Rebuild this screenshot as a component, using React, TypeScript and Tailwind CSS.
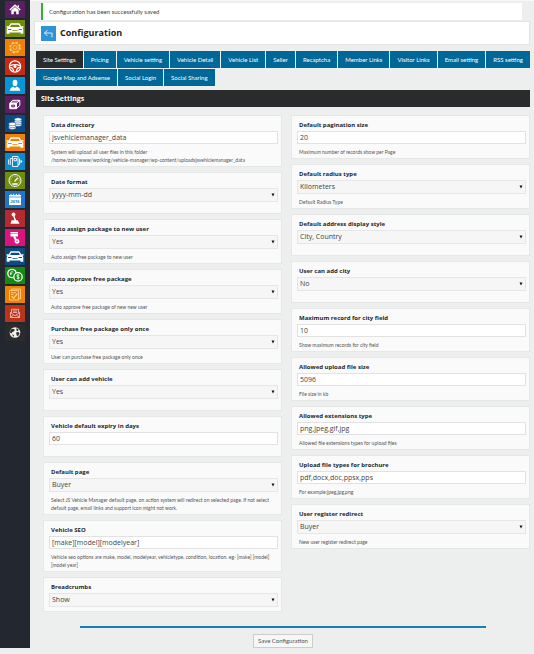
import React from "react";

const Car = () => (
  <g>
    <path d="M4.300 6.800 6 4h8l1.700 2.800" fill="none" stroke="#fff" strokeWidth="1.300" />
    <path
      d="M1.500 6.200h2.200l.6.700h11.400l.6-.7h2.200v1.200l-1.100.3.900 1.400v4.600h-2.800v-1.200H4.500v1.200H1.700V9.100l.9-1.400-1.100-.3z"
      fill="#fff"
    />
    <path d="M3 9h3.300l.4 1.100H3zM17 9h-3.300l-.4 1.100H17zM7.500 10.200h5v.8h-5z" className="fill-current" />
  </g>
);

type Tile = { name: string; tone: string; art: React.ReactNode };

const tiles: Tile[] = [
  {
    name: "Home",
    tone: "bg-[#5a1f60]",
    art: (
      <g>
        <path d="M4.800 9 10 4.300 15.200 9" fill="none" stroke="#fff" strokeWidth="1.500" />
        <path d="M12.600 4.200h1.400v2.600l-1.400-1.200zM6.300 9.300 10 6.100l3.700 3.200v4h-2.500v-2.800H8.800v2.800H6.300z" fill="#fff" />
      </g>
    ),
  },
  { name: "Vehicles", tone: "bg-[#708c0c] text-[#708c0c]", art: <Car /> },
  {
    name: "Settings",
    tone: "bg-[#ee8204]",
    art: (
      <g fill="none" stroke="#fbd08f">
        <circle cx="10" cy="8.500" r="5.200" strokeWidth="1.300" strokeDasharray="2.200 1.884" />
        <circle cx="10" cy="8.500" r="4.300" strokeWidth=".8" />
        <circle cx="10" cy="8.500" r="2" strokeWidth=".8" />
      </g>
    ),
  },
  {
    name: "Steering",
    tone: "bg-[#c62b14]",
    art: (
      <g fill="none" stroke="#fff">
        <circle cx="10" cy="8.500" r="5.600" strokeWidth="1.200" />
        <path d="M5 7.600q5-2 10 0M5 9.300q3 0 3.700 4M15 9.300q-3 0-3.700 4" strokeWidth="1.200" />
        <circle cx="10" cy="8.600" r="1.500" fill="#fff" stroke="none" />
      </g>
    ),
  },
  {
    name: "Users",
    tone: "bg-[#0795d8]",
    art: (
      <g fill="#fff">
        <ellipse cx="10" cy="5.900" rx="2.400" ry="3.100" />
        <path d="M4.800 13.800q0-3 3.600-4.200L10 11l1.600-1.400q3.600 1.200 3.600 4.200z" />
      </g>
    ),
  },
  {
    name: "Packages",
    tone: "bg-[#5a1f60]",
    art: (
      <g stroke="#fff" strokeWidth="1" fill="none">
        <path d="M5 7.300 7.500 4.300h7.300l-3.300 3z" fill="#fff" fillOpacity=".35" />
        <path d="M14.800 4.300v5.200l-3.300 3" />
        <path d="M4.800 7.300h6.700v5.400H4.800z" fill="#fff" />
        <path d="M6.700 9.200h2.900v1.600H6.700z" stroke="#5a1f60" />
      </g>
    ),
  },
  {
    name: "Credits",
    tone: "bg-[#0c4a86]",
    art: (
      <g fill="#fff" stroke="#0c4a86" strokeWidth=".5">
        <ellipse cx="13" cy="9.800" rx="3.600" ry="1.700" />
        <ellipse cx="13" cy="8.100" rx="3.600" ry="1.700" />
        <ellipse cx="13" cy="6.400" rx="3.600" ry="1.700" />
        <ellipse cx="13" cy="4.500" rx="3.600" ry="1.700" />
        <ellipse cx="7.300" cy="12.700" rx="3.600" ry="1.700" />
        <ellipse cx="7.300" cy="11" rx="3.600" ry="1.700" />
        <ellipse cx="7.300" cy="9" rx="3.600" ry="1.700" />
      </g>
    ),
  },
  { name: "Makes", tone: "bg-[#f08006] text-[#f08006]", art: <Car /> },
  {
    name: "Fuel types",
    tone: "bg-[#0b8bcb]",
    art: (
      <g fill="none" stroke="#fff" strokeWidth=".9">
        <path d="M7.500 3.500h5.500v10H7.500zM7.500 5.500H5.300v6.500M3.600 6.500v5M9 5.500h2.500v2.300H9zM13 11.500h1.500V5.500" />
        <path d="m15.500 6.500 2 2-2 2z" fill="#fff" stroke="none" />
      </g>
    ),
  },
  {
    name: "Mileages",
    tone: "bg-[#708c0c]",
    art: (
      <g fill="none" stroke="#fff">
        <circle cx="10" cy="8.500" r="6" strokeWidth="1" />
        <circle cx="10" cy="8.500" r="4.300" strokeWidth=".8" strokeDasharray=".7 1" />
        <path d="m9.500 9.500 3.200-3.500M7.500 12h5" strokeWidth="1.300" />
      </g>
    ),
  },
  {
    name: "Model years",
    tone: "bg-[#2175c7]",
    art: (
      <g>
        <path d="M4 4h12v10H4z" fill="#fff" />
        <path d="M4 6h12" stroke="#2175c7" strokeWidth=".7" />
        <path d="M6 2.800v2.400M8.700 2.800v2.400M11.300 2.800v2.400M14 2.800v2.400" stroke="#fff" strokeWidth="1" />
        <text x="10" y="11.500" textAnchor="middle" fontSize="4" fontWeight="700" fill="#2175c7">
          2016
        </text>
      </g>
    ),
  },
  {
    name: "Transmissions",
    tone: "bg-[#b32b30]",
    art: (
      <g fill="#fff">
        <circle cx="8.500" cy="4.500" r="1.900" />
        <path d="m8 5.500 1.200-.3 2 5.300H9.500zM5.500 13.800 6.600 10.300h6.200l1.700 3.500z" />
      </g>
    ),
  },
  {
    name: "Cylinders",
    tone: "bg-[#dc127f]",
    art: (
      <g fill="#fff">
        <path d="M5.500 3h7.500v1H5.500zM5.500 4.600H13v2.800H5.500z" />
        <path d="m8 7.500 2.200-.3 2.200 4.300-1.700.9z" />
        <circle cx="12" cy="12.300" r="2.400" />
        <circle cx="12" cy="12.300" r=".8" fill="#dc127f" />
      </g>
    ),
  },
  { name: "Conditions", tone: "bg-[#0b4a82] text-[#0b4a82]", art: <Car /> },
  {
    name: "Currencies",
    tone: "bg-[#158a10]",
    art: (
      <g fill="#158a10" stroke="#fff" strokeWidth="1.300">
        <circle cx="7" cy="6.500" r="4.200" />
        <circle cx="13" cy="9.900" r="4.200" />
        <path
          d="M8.200 5q-2.500-1-2.500 1v2.200M5 6.800h2.200M14.300 8.200q-2.500-1-2.500.5 0 .8 1.200 1.100 1.300.3 1.300 1.100 0 1.400-2.500.6M13 7.300v5"
          fill="none"
          strokeWidth=".8"
        />
      </g>
    ),
  },
  {
    name: "Reports",
    tone: "bg-[#ee8204]",
    art: (
      <g fill="none" stroke="#fbd08f" strokeWidth=".9">
        <path d="M6.500 4.500v-1.500h9v9.500H13.500M4.500 4.500h9v9.500h-9zM6 6.700h5M6 8.500h2.500" />
        <path d="m6.700 10.300 2 2 3.600-4.600" strokeWidth="1.300" />
      </g>
    ),
  },
  {
    name: "Email templates",
    tone: "bg-[#b7351b]",
    art: (
      <g fill="none" stroke="#eebcb1" strokeWidth=".9">
        <path d="M5.500 7.500V12.500h9v-5L10 10.800zM6.500 8V4.300h7V8M8 6h4M8 7.500h4M5.700 12.300l3-2.500M14.300 12.300l-3-2.500" />
      </g>
    ),
  },
  {
    name: "Locations",
    tone: "bg-[#2b2b2c]",
    art: (
      <g>
        <circle cx="10" cy="8.500" r="5.300" fill="#f2f2f2" />
        <path
          d="m5.500 5.500 2.500-.8 2 1-1.300 1.900-1.500.5-.5 1.500L5 8.600zM11.500 4l2.300 1.800-1.300 1.400-1-.8zM11 8.500l2.500-.5 1 1.200-1.500 3-1.200-.7zM7 10.300l2 .8-.5 2z"
          fill="#2b2b2c"
        />
      </g>
    ),
  },
];

const mainTabs = [
  "Site Settings",
  "Pricing",
  "Vehicle setting",
  "Vehicle Detail",
  "Vehicle List",
  "Seller",
  "Recaptcha",
  "Member Links",
  "Visitor Links",
  "Email setting",
  "RSS setting",
];

const socialTabs = ["Google Map and Adsense", "Social Login", "Social Sharing"];

type FieldData = {
  id: string;
  label: string;
  value: string;
  select?: boolean;
  hint?: string[];
  compact?: boolean;
};

const leftFields: FieldData[] = [
  {
    id: "data-directory",
    label: "Data directory",
    value: "jsvehiclemanager_data",
    hint: [
      "System will upload all user files in this folder",
      "/home/zain/www/working/vehicle-manager/wp-content/uploadsjsvehiclemanager_data",
    ],
  },
  { id: "date-format", label: "Date format", value: "yyyy-mm-dd", select: true },
  { id: "auto-assign", label: "Auto assign package to new user", value: "Yes", select: true, hint: ["Auto assign free package to new user"] },
  { id: "auto-approve", label: "Auto approve free package", value: "Yes", select: true, hint: ["Auto approve free package of new new user"] },
  { id: "purchase-once", label: "Purchase free package only once", value: "Yes", select: true, hint: ["User can purchase free package only once"] },
  { id: "add-vehicle", label: "User can add vehicle", value: "Yes", select: true },
  { id: "expiry", label: "Vehicle default expiry in days", value: "60" },
  {
    id: "default-page",
    label: "Default page",
    value: "Buyer",
    select: true,
    hint: [
      "Select JS Vehicle Manager default page, on action system will redirect on selected page. If not select",
      "default page, email links and support icon might not work.",
    ],
  },
  {
    id: "vehicle-seo",
    label: "Vehicle SEO",
    value: "[make][model][modelyear]",
    hint: [
      "Vehicle seo options are make, model, modelyear, vehicletype, condition, location. eg- [make] [model]",
      "[model year]",
    ],
  },
  { id: "breadcrumbs", label: "Breadcrumbs", value: "Show", select: true, compact: true },
];

const rightFields: FieldData[] = [
  { id: "pagination", label: "Default pagination size", value: "20", hint: ["Maximum number of records show per Page"] },
  { id: "radius", label: "Default radius type", value: "Kilometers", select: true, hint: ["Default Radius Type"] },
  { id: "address", label: "Default address display style", value: "City, Country", select: true },
  { id: "add-city", label: "User can add city", value: "No", select: true },
  { id: "max-city", label: "Maximum record for city field", value: "10", hint: ["Show maximum records for city field"] },
  { id: "file-size", label: "Allowed upload file size", value: "5096", hint: ["File size in kb"] },
  { id: "extensions", label: "Allowed extensions type", value: "png,jpeg,gif,jpg", hint: ["Allowed file extensions types for upload files"] },
  { id: "brochure", label: "Upload file types for brochure", value: "pdf,docx,doc,ppsx,pps", hint: ["For example:jpeg,jpg,png"] },
  { id: "redirect", label: "User register redirect", value: "Buyer", select: true, hint: ["New user register redirect page"] },
];

function Field({ id, label, value, select, hint, compact }: FieldData) {
  return (
    <div className="border border-[#e6e7e7] bg-[#fafafa] pt-[5px] pr-[3px] pl-[5px]">
      <label htmlFor={id} className="mb-px block pl-0.5 text-[6px] leading-[9px] font-bold text-[#23282d]">
        {label}
      </label>
      {select ? (
        <div className="relative">
          <select
            id={id}
            defaultValue={value}
            className="block h-3.5 w-full appearance-none border border-[#e6e6e6] bg-[#f6f6f6] px-0.5 text-[7px] leading-3 text-[#444]"
          >
            <option>{value}</option>
          </select>
          <svg viewBox="0 0 4 4" className="pointer-events-none absolute top-[5px] right-[3px] size-1">
            <path d="M.5.500h3L2 3.500z" fill="#111" />
          </svg>
        </div>
      ) : (
        <input
          id={id}
          defaultValue={value}
          className="block h-[13px] w-full border border-[#e2e2e2] bg-white px-0.5 text-[7px] leading-[11px] text-[#444]"
        />
      )}
      {hint ? (
        <p className="pt-1 pb-0.5 pl-0.5 font-[Lato,sans-serif] text-[5px] leading-[8px] text-[#555]">
          {hint.map((line) => (
            <span key={line} className="block whitespace-nowrap">
              {line}
            </span>
          ))}
        </p>
      ) : (
        <div className={compact ? "h-1" : "h-[11px]"} />
      )}
    </div>
  );
}

export default function App() {
  return (
    <div className="min-h-screen bg-[#edefef] pb-1.5 font-['Open_Sans','Noto_Sans',sans-serif]">
      <div className="flex">
        <nav aria-label="Sections" className="flex w-[30px] shrink-0 flex-col items-center gap-0.5 bg-[#23272f] pt-px">
          {tiles.map((tile) => (
            <a key={tile.name} href="#" aria-label={tile.name} className={`block h-[17px] w-5 ${tile.tone}`}>
              <svg viewBox="0 0 20 17" className="block h-[17px] w-5">
                {tile.art}
              </svg>
            </a>
          ))}
        </nav>

        <main className="min-w-0 grow border-t border-[#f8f8f8] px-1">
          <div role="status" className="mt-0.5 mr-2 ml-[7px] h-[17px] border-l-2 border-[#32ad3c] bg-white pl-1.5 font-[Lato,sans-serif] text-[6px] leading-[18px] text-[#444]">
            Configuration has been successfully saved
          </div>

          <header className="mt-px flex h-6 items-center gap-1 border border-[#e2e4e4] bg-white pl-1.5">
            <a href="#" aria-label="Back" className="block size-[15px] bg-[#3093d6]">
              <svg viewBox="0 0 15 15" className="size-[15px]" fill="none" stroke="#d9edfa" strokeWidth="1">
                <path d="M6.500 4 3.500 7l3 3M3.500 7h7.500v4.500" />
              </svg>
            </a>
            <h1 className="text-[9px] leading-3 font-bold text-[#1c1c1c]">Configuration</h1>
          </header>

          <div className="pl-0.5">
            <nav aria-label="Configuration pages" className="mt-1.5 flex flex-col gap-px text-center font-[Lato,sans-serif] text-[6px] leading-[17px] whitespace-nowrap text-white">
              <div className="flex gap-px">
                {mainTabs.map((tab, i) => (
                  <a key={tab} href="#" className={`h-[17px] grow px-1.5 ${i === 0 ? "bg-[#2a2b2d]" : "bg-[#006799]"}`}>
                    {tab}
                  </a>
                ))}
              </div>
              <div className="flex gap-px">
                {socialTabs.map((tab) => (
                  <a key={tab} href="#" className="h-[17px] bg-[#006799] px-[7px]">
                    {tab}
                  </a>
                ))}
              </div>
            </nav>

            <h2 className="mt-1 h-[17px] bg-[#2a2b2d] pl-[5px] text-[7px] leading-[17px] font-bold text-white">Site Settings</h2>

            <form onSubmit={(e) => e.preventDefault()}>
              <div className="mt-2 grid grid-cols-2 items-start gap-[9px] pl-[7px]">
                <div className="flex flex-col gap-[5px]">
                  {leftFields.map((f) => (
                    <Field key={f.id} {...f} />
                  ))}
                </div>
                <div className="flex flex-col gap-[5px]">
                  {rightFields.map((f) => (
                    <Field key={f.id} {...f} />
                  ))}
                </div>
              </div>
              <div className="mx-auto mt-3.5 flex w-[82%] justify-center border-t-2 border-[#1a7fb6] pt-1.5">
                <button className="h-3.5 border border-[#ccc] bg-[#f7f7f7] px-1 font-[Lato,sans-serif] text-[6px] leading-3 text-[#555]">Save Configuration</button>
              </div>
            </form>
          </div>
        </main>
      </div>
    </div>
  );
}
